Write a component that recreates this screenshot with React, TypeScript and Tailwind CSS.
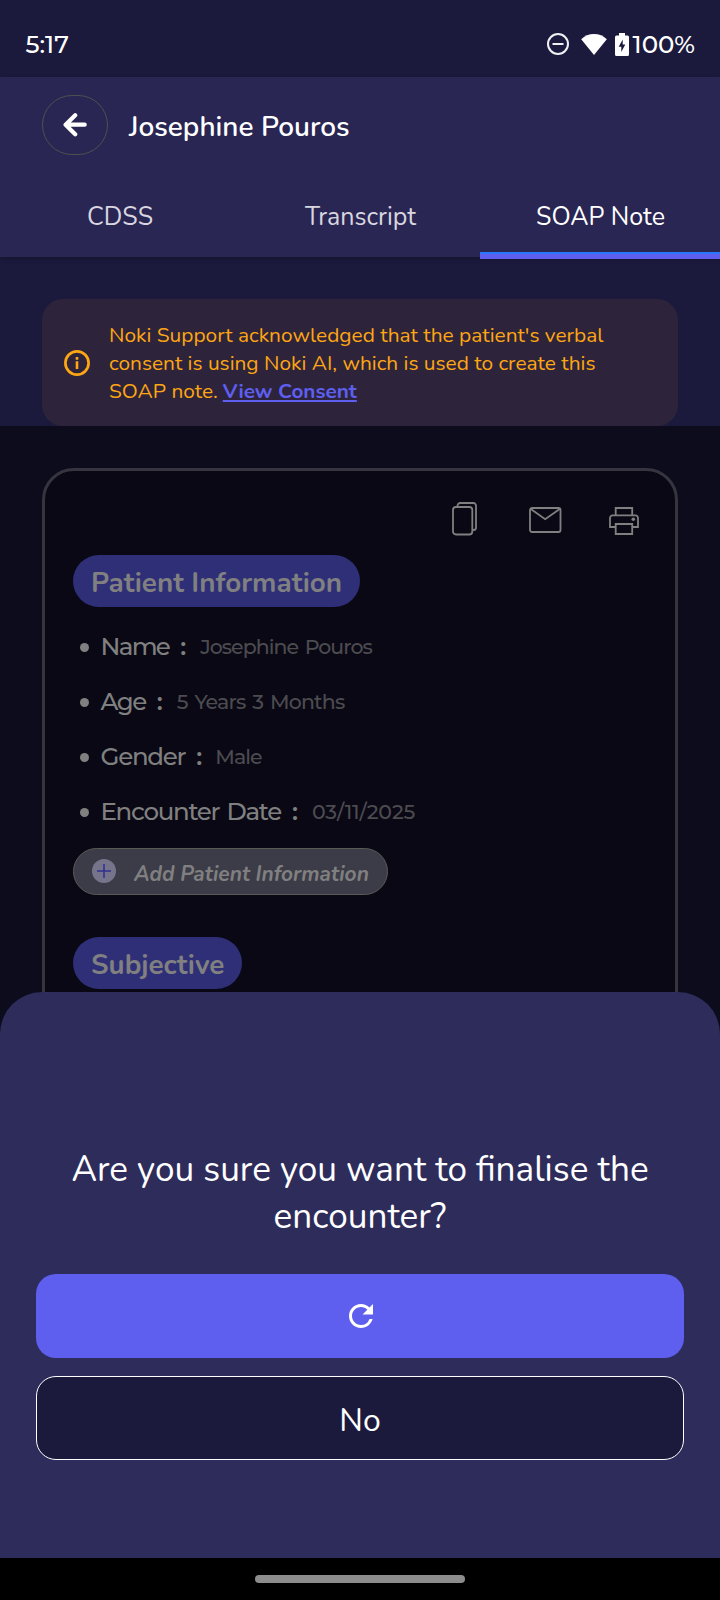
import { MdRefresh } from "react-icons/md";

const details = [
  { label: "Name", value: "Josephine Pouros", labelClass: "tracking-[-1.7px] mr-[11px]", valueClass: "tracking-[-0.95px] [word-spacing:2px] ml-[14px]" },
  { label: "Age", value: "5 Years 3 Months", labelClass: "tracking-[-1.5px] mr-[11px]", valueClass: "tracking-[-0.8px] [word-spacing:2px] ml-[14px]" },
  { label: "Gender", value: "Male", labelClass: "tracking-[-1.25px] mr-[11px]", valueClass: "tracking-[-1px] ml-[13px]" },
  { label: "Encounter Date", value: "03/11/2025", labelClass: "tracking-[-1.3px] [word-spacing:2px] mr-[11px]", valueClass: "tracking-[-0.1px] ml-[14px]" },
];

function StatusBar() {
  return (
    <div className="flex h-[77px] shrink-0 items-center bg-[#1b1a3d] pt-[11px] pr-[25px] pl-[25.5px] font-['Montserrat','Lato',sans-serif] text-[24.5px] leading-[30px] font-medium text-white">
      <span className="flex-1">5:17</span>
      <svg className="mr-[11px] h-[24px] w-[24px]" viewBox="0 0 24 24" fill="none" stroke="#f0f0f5" strokeWidth="2">
        <circle cx="12" cy="12" r="10" />
        <path d="M6.500 12h11" />
      </svg>
      <svg className="mr-[8px] h-[22px] w-[26px]" viewBox="0 0 26 22" fill="#fff">
        <path d="M0.200 6.200C3.600 2.800 8 1 13 1s9.400 1.800 12.800 5.200L13 22Z" />
      </svg>
      <svg className="mr-[4px] h-[23px] w-[14px]" viewBox="0 0 14 23">
        <path fill="#fff" d="M4 0h6v2.500h2.500A1.500 1.500 0 0 1 14 4v17.500a1.500 1.500 0 0 1-1.500 1.500h-11A1.500 1.500 0 0 1 0 21.500V4a1.500 1.500 0 0 1 1.500-1.500H4Z" />
        <path fill="#1b1a3d" d="M7.700 6.500v5h2.600L6.300 19v-5.200H3.700Z" />
      </svg>
      <span>100%</span>
    </div>
  );
}

function Header() {
  return (
    <header className="relative z-10 flex h-[180px] shrink-0 flex-col bg-[#292653] pt-[18px] shadow-[0_2px_5px_rgba(0,0,0,0.25)]">
      <div className="flex h-[60px] items-center pl-[42px]">
        <button className="flex h-[60px] w-[66px] items-center justify-center rounded-[30px] border border-[#504f50]">
          <svg className="h-[24px] w-[24px]" viewBox="0 0 24 24" fill="none" stroke="#fff" strokeWidth="4.200" strokeLinecap="round" strokeLinejoin="round">
            <path d="M12.200 2.300 2.600 11.700l9.600 9.600M3.500 11.700h18.200" />
          </svg>
        </button>
        <h1 className="mt-[4px] ml-[21px] text-[28px] leading-[38px] font-semibold text-white">Josephine Pouros</h1>
      </div>
      <nav className="grid flex-1 grid-cols-3 text-center text-[25px] leading-[34px] text-[#d9d6e0]">
        <span className="pt-[45px]">CDSS</span>
        <span className="pt-[45px] pl-[1px]">Transcript</span>
        <span className="relative pt-[45px] pl-[1px] text-white">
          SOAP Note
          <i className="absolute inset-x-0 -bottom-[2px] h-[7px] border-t-2 border-[#2a76fc] bg-[#5e5fef]" />
        </span>
      </nav>
    </header>
  );
}

function ConsentBanner() {
  return (
    <div className="bg-[#1b1a3d] px-[42px] pt-[42px]">
      <div className="flex h-[127px] items-center rounded-[21px] bg-[#2d243b] pl-[22px]">
        <svg className="h-[26px] w-[26px]" viewBox="0 0 26 26" fill="none" stroke="#fea613">
          <circle cx="13" cy="13" r="11.600" strokeWidth="2.700" />
          <path d="M13 11.300v7.700M13 7v2.700" strokeWidth="2.600" />
        </svg>
        <p className="ml-[19px] pt-[1px] text-[20.88px] leading-[28px] whitespace-nowrap text-[#fea613]">
          Noki Support acknowledged that the patient's verbal
          <br />
          consent is using Noki AI, which is used to create this
          <br />
          SOAP note.{" "}
          <a className="-ml-[0.5px] text-[20.7px] font-bold text-[#5e5fef] underline decoration-[1.5px] underline-offset-[2px]">View Consent</a>
        </p>
      </div>
    </div>
  );
}

function CardActions() {
  return (
    <div className="flex h-[33px] items-start pl-[407px]">
      <svg className="h-[34px] w-[26px]" viewBox="0 0 26 34" fill="none" stroke="#808080" strokeWidth="1.800">
        <rect x="1" y="5" width="19.300" height="27.500" rx="3" />
        <path d="M5.500 4.500V3.600A2.600 2.600 0 0 1 8.100 1h13.300A2.600 2.600 0 0 1 24 3.600v21.800a2.600 2.600 0 0 1-2.600 2.600h-1" />
      </svg>
      <svg className="mt-[5px] ml-[51px] h-[26px] w-[33px]" viewBox="0 0 33 26" fill="none" stroke="#808080" strokeWidth="1.800">
        <rect x="1" y="1" width="30.500" height="24" rx="2" />
        <path d="M1.800 2 16.200 12.200 30.700 2" />
      </svg>
      <svg className="mt-[5px] ml-[47px] h-[28px] w-[30px]" viewBox="0 0 30 28" fill="none" stroke="#808080" strokeWidth="1.800">
        <path d="M6.700 8.400V1h16.500v7.400M6.700 20H1V11a2.600 2.600 0 0 1 2.600-2.600h22.800A2.600 2.600 0 0 1 29 11v9h-5.800M6.700 17h16.500v10H6.700Z" />
        <circle cx="24.300" cy="12.300" r="1.800" fill="#808080" stroke="none" />
      </svg>
    </div>
  );
}

function SectionTitle({ children }: { children: string }) {
  return (
    <h2 className="flex h-[52px] w-fit items-center rounded-[26px] bg-[#2f2f78] pt-[3px] pr-[17.5px] pl-[18px] text-[27.8px] leading-[38px] font-bold text-[#808080]">
      {children}
    </h2>
  );
}

function NoteCard() {
  return (
    <div className="flex-1 overflow-hidden bg-[#0d0c1d] px-[42px] pt-[42px]">
      <section className="h-[700px] rounded-[32px] border-[3px] border-[#35343f] bg-[#090814] pt-[31px] pl-[28px]">
        <div className="-ml-[28px]">
          <CardActions />
        </div>
        <div className="mt-[20px]">
          <SectionTitle>Patient Information</SectionTitle>
        </div>
        <ul className="mt-[12px]">
          {details.map((item) => (
            <li key={item.label} className="flex h-[55px] items-center pl-[7px] font-['Montserrat','Lato',sans-serif] leading-[30px] whitespace-nowrap text-[#808080]">
              <span className="mt-[2px] mr-[11.5px] h-[9px] w-[9px] rounded-full bg-[#808080]" />
              <span className={`mb-[2px] text-[24.5px] font-medium ${item.labelClass}`}>{item.label}</span>
              <span className="mb-[2px] text-[24.5px] font-semibold">:</span>
              <span className={`text-[20.5px] font-medium text-[#4c4b50] ${item.valueClass}`}>{item.value}</span>
            </li>
          ))}
        </ul>
        <button className="mt-[9px] mb-[42px] flex h-[47px] w-[315px] items-center rounded-[24px] border border-[#5a5a55] bg-[#3c3b48] pl-[18px]">
          <svg className="mb-[1px] h-[24px] w-[24px]" viewBox="0 0 24 24">
            <circle cx="12" cy="12" r="12" fill="#75748a" />
            <path d="M12 5v14M5 12h14" stroke="#2f2f90" strokeWidth="1.500" />
          </svg>
          <span className="mt-[4px] ml-[18px] text-[20.9px] leading-[28px] font-bold whitespace-nowrap text-[#808080] italic">
            Add Patient Information
          </span>
        </button>
        <SectionTitle>Subjective</SectionTitle>
      </section>
    </div>
  );
}

function FinaliseSheet() {
  return (
    <div className="absolute inset-x-0 top-[992px] h-[566px] rounded-t-[42px] bg-[#2e2c5a] px-[36px] pt-[154px] text-white">
      <p className="text-center text-[35.15px] leading-[47px] whitespace-nowrap">
        Are you sure you want to finalise the
        <br />
        encounter?
      </p>
      <button className="mt-[34px] flex h-[84px] w-full items-center justify-center rounded-[20px] bg-[#5e5fef] pl-[1px]">
        <MdRefresh className="h-[36px] w-[36px]" />
      </button>
      <button className="mt-[18px] flex h-[84px] w-full items-center justify-center rounded-[20px] border-[1.5px] border-white bg-[#1b1a3d] pt-[5px] text-[32px] leading-[44px]">
        No
      </button>
    </div>
  );
}

export default function App() {
  return (
    <div className="relative flex h-[1600px] w-[720px] flex-col overflow-hidden bg-[#0d0c1d] font-['Nunito','Lato',sans-serif]">
      <StatusBar />
      <Header />
      <ConsentBanner />
      <NoteCard />
      <FinaliseSheet />
      <div className="relative flex h-[42px] shrink-0 items-center justify-center bg-black">
        <span className="h-[8px] w-[210px] rounded-full bg-[#8c8c8c]" />
      </div>
    </div>
  );
}
